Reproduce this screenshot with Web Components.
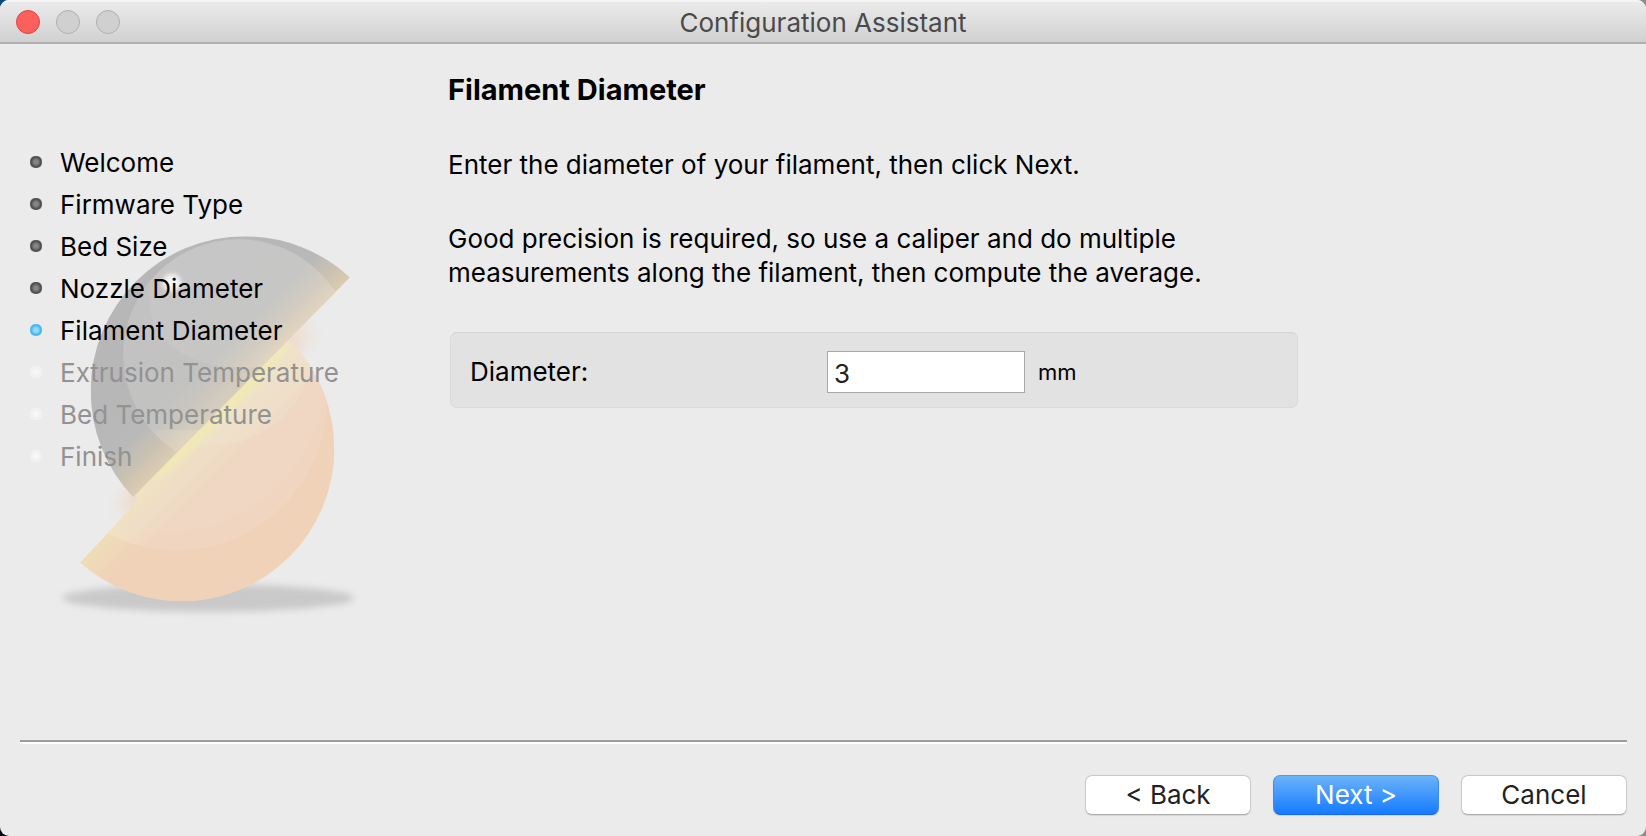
<!DOCTYPE html>
<html lang="en">
<head>
<meta charset="utf-8">
<meta name="viewport" content="width=device-width, initial-scale=1">
<title>Configuration Assistant</title>
<style>
  html, body { height: 100%; margin: 0; }
  body {
    font: 26px/34px Inter, "Liberation Sans", sans-serif;
    color: #000;
    background:
      linear-gradient(to right, transparent 50%, #8c8c8c 50%),
      linear-gradient(#12497a, #04080f);
  }
</style>
</head>
<body>
<assistant-window>
  <title-bar slot="title">Configuration Assistant</title-bar>
  <step-list slot="steps">
    <step-item state="done">Welcome</step-item>
    <step-item state="done">Firmware Type</step-item>
    <step-item state="done">Bed Size</step-item>
    <step-item state="done">Nozzle Diameter</step-item>
    <step-item state="current">Filament Diameter</step-item>
    <step-item state="pending">Extrusion Temperature</step-item>
    <step-item state="pending">Bed Temperature</step-item>
    <step-item state="pending">Finish</step-item>
  </step-list>
  <assistant-page heading="Filament Diameter">
    <page-text>Enter the diameter of your filament, then click Next.</page-text>
    <page-text>Good precision is required, so use a caliper and do multiple measurements along the filament, then compute the average.</page-text>
    <measure-field label="Diameter:" value="3" unit="mm"></measure-field>
  </assistant-page>
  <button-row slot="footer">
    <push-button>&lt; Back</push-button>
    <push-button primary>Next &gt;</push-button>
    <push-button>Cancel</push-button>
  </button-row>
</assistant-window>

<script>
const define = (name, html, setup) => {
  const template = document.createElement('template');
  template.innerHTML = html;
  customElements.define(name, class extends HTMLElement {
    constructor() {
      super();
      this.attachShadow({ mode: 'open' }).append(template.content.cloneNode(true));
    }
    connectedCallback() {
      if (setup) setup(this, this.shadowRoot);
    }
  });
};

define('assistant-window', `
  <style>
    :host {
      display: grid;
      grid-template: auto 1fr auto / 448px minmax(0, 1fr);
      min-height: 100vh;
      background: #ebebeb;
      border-radius: 9px;
      overflow: hidden;
    }
    header, footer { grid-column: 1 / -1; }
  </style>
  <header><slot name="title"></slot></header>
  <nav><slot name="steps"></slot></nav>
  <main><slot></slot></main>
  <footer><slot name="footer"></slot></footer>
`);

define('title-bar', `
  <style>
    :host {
      display: grid;
      grid-template-columns: 1fr auto 1fr;
      align-items: center;
      height: 42px;
      padding: 0 16px;
      background: linear-gradient(#ececec, #d1d1d1);
      border-bottom: 2px solid #b0b0b0;
      box-shadow: inset 0 2px #f5f5f5;
      color: #4a4a4a;
    }
    .lights { display: flex; gap: 16px; padding-top: 2px; }
    button {
      box-sizing: border-box;
      width: 24px;
      height: 24px;
      padding: 0;
      border: 1px solid #b0b0b0;
      border-radius: 50%;
      background: #d0d0d0;
    }
    .close { background: #fc605c; border-color: #e0443f; }
    h1 { margin: 0; font: inherit; padding-top: 4px; }
  </style>
  <div class="lights">
    <button class="close" type="button" aria-label="Close"></button>
    <button type="button" aria-label="Minimize" disabled></button>
    <button type="button" aria-label="Zoom" disabled></button>
  </div>
  <h1><slot></slot></h1>
`);

define('sphere-logo', `
  <style>
    :host { display: block; }
    svg { display: block; width: 100%; }
  </style>
  <svg viewBox="0 0 1200 1290" aria-hidden="true">
    <defs>
      <linearGradient id="dark" gradientUnits="userSpaceOnUse" x1="560" y1="400" x2="728" y2="568">
        <stop offset="0" stop-color="#b7b7b7"/>
        <stop offset=".45" stop-color="#b9b9b9"/>
        <stop offset=".75" stop-color="#cbc2b2"/>
        <stop offset="1" stop-color="#ddceb1"/>
      </linearGradient>
      <linearGradient id="lightdark" gradientUnits="userSpaceOnUse" x1="560" y1="400" x2="728" y2="568">
        <stop offset="0" stop-color="#c6c6c6"/>
        <stop offset=".45" stop-color="#c6c6c5"/>
        <stop offset=".75" stop-color="#d3ccc0"/>
        <stop offset="1" stop-color="#e3d6bf"/>
      </linearGradient>
      <linearGradient id="hot" gradientUnits="userSpaceOnUse" x1="645" y1="645" x2="735" y2="735">
        <stop offset="0" stop-color="#efdfb4"/>
        <stop offset=".35" stop-color="#efdbb8"/>
        <stop offset="1" stop-color="#f0d2b8"/>
      </linearGradient>
      <linearGradient id="lighthot" gradientUnits="userSpaceOnUse" x1="645" y1="645" x2="740" y2="740">
        <stop offset="0" stop-color="#f0e5bf"/>
        <stop offset=".45" stop-color="#f0dfc3"/>
        <stop offset="1" stop-color="#f0d6c0"/>
      </linearGradient>
      <clipPath id="aboveCut"><path d="M0 0H1282L1045 237L403 887L0 1295Z"/></clipPath>
      <clipPath id="belowCut"><path d="M0 1328L245 1083L412 904L412 868L870 416L1200 86V1328Z"/></clipPath>
      <clipPath id="upper" clip-path="url(#aboveCut)"><circle cx="735" cy="572" r="463"/></clipPath>
      <clipPath id="lower" clip-path="url(#belowCut)"><circle cx="545" cy="746" r="458"/></clipPath>
      <filter id="soft" x="-20%" y="-50%" width="140%" height="200%"><feGaussianBlur stdDeviation="11"/></filter>
      <filter id="glow" x="-50%" y="-150%" width="200%" height="400%"><feGaussianBlur stdDeviation="24"/></filter>
      <filter id="edge" x="-20%" y="-50%" width="140%" height="200%"><feGaussianBlur stdDeviation="7"/></filter>
    </defs>
    <ellipse cx="625" cy="1194" rx="438" ry="41" fill="#c9c9c9" filter="url(#soft)"/>
    <ellipse cx="645" cy="660" rx="400" ry="50" transform="rotate(-45 645 660)" fill="#f0d8c6" filter="url(#glow)"/>
    <g clip-path="url(#lower)">
      <rect width="1200" height="1290" fill="url(#hot)"/>
      <circle cx="530" cy="600" r="451" fill="url(#lighthot)"/>
      <circle cx="480" cy="500" r="502" fill="#f0e0d0" opacity=".18"/>
      <circle cx="640" cy="435" r="300" fill="#f0e6d0" opacity=".35"/>
      <ellipse cx="664" cy="636" rx="280" ry="20" transform="rotate(-45 664 636)" fill="#f0e9b6" filter="url(#edge)"/>
    </g>
    <g clip-path="url(#upper)">
      <rect width="1200" height="1290" fill="url(#dark)"/>
      <circle cx="716" cy="464" r="346" fill="url(#lightdark)"/>
      <path d="M375 430A341 341 0 0 0 450 690L600 690L760 560L790 500Q560 520 470 390Q440 330 450 245Q380 320 375 430Z" fill="#b4b4b4" opacity=".22"/>
      <ellipse cx="515" cy="248" rx="28" ry="27" fill="#f4f4f4" filter="url(#edge)"/>
    </g>
  </svg>
`);

define('step-list', `
  <style>
    :host { display: grid; }
    sphere-logo, .steps { grid-area: 1 / 1; align-self: start; }
    sphere-logo { width: 400px; margin-top: 156px; }
    .steps { z-index: 1; margin-top: 97px; padding-left: 30px; }
  </style>
  <sphere-logo></sphere-logo>
  <div class="steps" role="list"><slot></slot></div>
`);

define('step-item', `
  <style>
    :host { --ring: #4c4c4c; --core: #858585; display: flex; align-items: center; gap: 18px; height: 42px; }
    :host([state="current"]) { --ring: #3fb4ec; --core: #96d8fb; }
    :host([state="pending"]) { --ring: #efefef; --core: #f7f7f7; color: #929292; }
    i {
      width: 12px;
      height: 12px;
      border-radius: 5px;
      background: radial-gradient(circle, var(--core) 2px, var(--ring) 5px, var(--core) 7px);
    }
    span { padding-top: 2px; }
  </style>
  <i></i><span><slot></slot></span>
`, host => {
  host.setAttribute('role', 'listitem');
  if (host.getAttribute('state') === 'current') host.setAttribute('aria-current', 'step');
});

define('assistant-page', `
  <style>
    :host { display: flex; flex-direction: column; gap: 40px; max-width: 850px; padding: 28px 20px 40px 0; }
    h2 { margin: 0; font-size: 29px; line-height: 36px; font-weight: 700; }
  </style>
  <h2></h2>
  <slot></slot>
`, (host, root) => {
  root.querySelector('h2').textContent = host.getAttribute('heading');
});

define('page-text', `
  <style>
    :host { display: block; }
    p { margin: 0; max-width: 800px; }
  </style>
  <p><slot></slot></p>
`);

define('measure-field', `
  <style>
    :host {
      display: grid;
      grid-template-columns: 357px 198px auto;
      align-items: center;
      margin: 2px 0 0 2px;
      padding: 18px 19px 14px;
      border: 1px solid #dadada;
      border-top-color: #d2d2d2;
      border-radius: 7px;
      background: #e2e2e2;
    }
    input {
      box-sizing: border-box;
      width: 100%;
      height: 42px;
      padding: 2px 6px 0;
      border: 1px solid #a8a8a8;
      border-radius: 0;
      outline: none;
      background: #fff;
      color: #222;
      font: inherit;
    }
    span { padding-left: 13px; font-size: 22px; }
  </style>
  <label for="value"></label>
  <input id="value" type="text" inputmode="decimal">
  <span></span>
`, (host, root) => {
  root.querySelector('label').textContent = host.getAttribute('label');
  root.querySelector('input').value = host.getAttribute('value');
  root.querySelector('span').textContent = host.getAttribute('unit');
});

define('button-row', `
  <style>
    :host { display: block; padding: 0 19px 21px 20px; }
    hr { height: 2px; margin: 0; border: 0; border-bottom: 2px solid #fff; background: #9d9d9d; }
    div { display: flex; justify-content: flex-end; gap: 22px; padding-top: 31px; }
  </style>
  <hr>
  <div><slot></slot></div>
`);

define('push-button', `
  <style>
    :host { display: block; }
    button {
      box-sizing: border-box;
      min-width: 166px;
      height: 40px;
      padding: 0 16px;
      border: 1px solid #c8c8c8;
      border-bottom-color: #acacac;
      border-radius: 7px;
      background: #fff;
      box-shadow: 0 1px 1px #00000018;
      color: #222;
      font: inherit;
    }
    :host([primary]) button {
      border-color: #4f9bee #3a8bf3 #1467f2;
      background: linear-gradient(#6cb3fa, #147bfe);
      color: #fff;
    }
  </style>
  <button type="button"><slot></slot></button>
`);
</script>
</body>
</html>
